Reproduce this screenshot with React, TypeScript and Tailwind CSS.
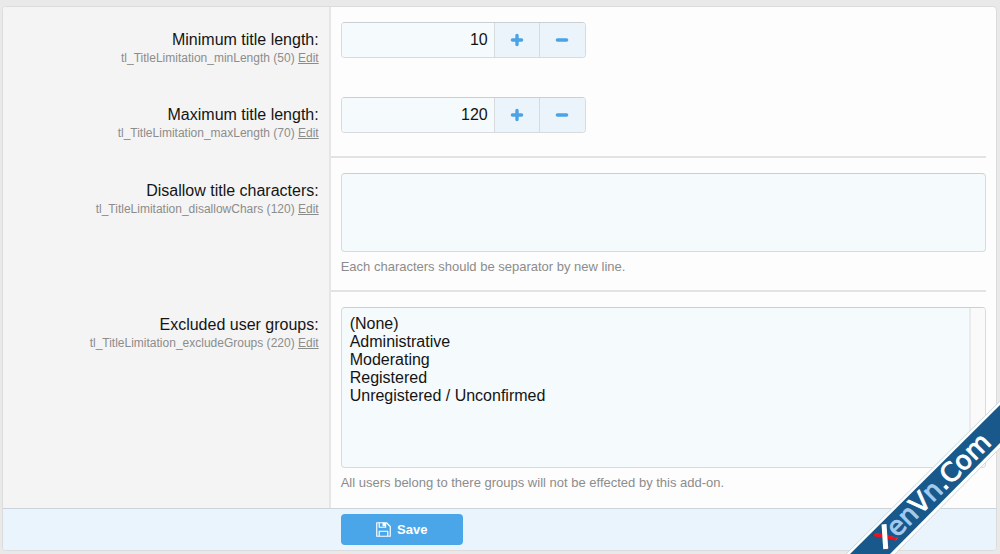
import React from 'react';

type RowProps = {
  id: string;
  label: string;
  name: string;
  order: number;
  divider?: boolean;
  children: React.ReactNode;
};

const FormRow: React.FC<RowProps> = ({ id, label, name, order, divider, children }) => (
  <div className="flex">
    <div className="w-[33%] shrink-0 border-r-2 border-[#e6e6e6] bg-[#f4f4f4] px-2.5 pt-[23px] text-right">
      <label htmlFor={id} className="block text-base leading-5 text-[#141414]">
        {label}
      </label>
      <div className="text-xs leading-4 text-[#8c8c8c]">
        {name} ({order}){' '}
        <a href="#edit" className="underline">
          Edit
        </a>
      </div>
    </div>
    <div className="flex min-w-0 grow flex-col pr-2.5">
      <div className="grow pl-2.5 pt-[15px]">{children}</div>
      {divider && <div className="h-0.5 bg-[#e3e3e3]" />}
    </div>
  </div>
);

const PlusIcon = () => (
  <svg width="14" height="14" viewBox="0 0 14 14" fill="none" stroke="#4aa3e5" strokeWidth="3.4" strokeLinecap="round">
    <path d="M7 2.4v9.2M2.4 7h9.2" />
  </svg>
);

const MinusIcon = () => (
  <svg width="14" height="14" viewBox="0 0 14 14" fill="none" stroke="#4aa3e5" strokeWidth="3.4" strokeLinecap="round">
    <path d="M2.4 7h9.2" />
  </svg>
);

const SaveIcon = () => (
  <svg width="15" height="15" viewBox="0 0 14 14" fill="none" stroke="currentColor" strokeWidth="1.1" strokeLinejoin="round">
    <path d="M.7.7h9.1l3.5 3.5v9.1H.7z" />
    <path d="M3 .9v4h6v-4" />
    <path d="M6.6 1.2h1.3v2.3H6.6z" fill="currentColor" />
    <path d="M3 13V8.6h8V13" />
  </svg>
);

const NumberBox: React.FC<{ id: string; value: number }> = ({ id, value }) => {
  const [current, setCurrent] = React.useState(value);

  return (
    <div className="flex h-9 w-[245px] overflow-hidden rounded border border-[#d8dbde] border-t-[#cccfd2]">
      <input
        id={id}
        type="text"
        inputMode="numeric"
        value={current}
        onChange={(e) => setCurrent(Number(e.target.value) || 0)}
        className="min-w-0 grow bg-[#f5fafd] px-1.5 text-right text-base text-[#141414] outline-none"
      />
      <button
        type="button"
        aria-label="Increase"
        onClick={() => setCurrent(current + 1)}
        className="flex w-[45px] shrink-0 items-center justify-center border-l border-[#d8dbde] bg-[#ebf4fb]"
      >
        <PlusIcon />
      </button>
      <button
        type="button"
        aria-label="Decrease"
        onClick={() => setCurrent(current - 1)}
        className="flex w-[46px] shrink-0 items-center justify-center border-l border-[#d8dbde] bg-[#ebf4fb]"
      >
        <MinusIcon />
      </button>
    </div>
  );
};

const Ribbon = () => (
  <svg className="pointer-events-none absolute right-0 bottom-0" width="160" height="160" viewBox="0 0 160 160">
    <path d="M1 165L165 2V49L50 165z" fill="#fdfefe" stroke="#cfd8dc" strokeWidth="1" />
    <path d="M5 165L165 6V44L45 165z" fill="#18588a" />
    <g transform="translate(45 156) rotate(-44.7)">
      <text fontFamily="DejaVu Sans, sans-serif" fontSize="26" fill="#fff" stroke="#fff" strokeWidth="0.9">
        <tspan fill="#f01018" stroke="#f01018">X</tspan>
        <tspan fill="#a5caee" stroke="#a5caee">en</tspan>
        <tspan>V</tspan>
        <tspan fill="#a5caee" stroke="#a5caee">n</tspan>
        <tspan>.Com</tspan>
      </text>
      {/* white arm crossing the red one */}
      <path d="M1.2 -.2L17.4 -19" stroke="#fff" strokeWidth="5" />
    </g>
  </svg>
);

const groups = ['(None)', 'Administrative', 'Moderating', 'Registered', 'Unregistered / Unconfirmed'];

export default function App() {
  return (
    <div className="relative min-h-screen overflow-hidden bg-[#e9e9e9] px-0.5 pt-1.5 font-['Liberation_Sans',Arial,sans-serif]">
      <form
        onSubmit={(e) => e.preventDefault()}
        className="mr-px overflow-hidden rounded border border-[#dcdcdc] bg-[#fdfdfd]"
      >
        <FormRow id="minLength" label="Minimum title length:" name="tl_TitleLimitation_minLength" order={50}>
          <div className="pb-6">
            <NumberBox id="minLength" value={10} />
          </div>
        </FormRow>
        <FormRow id="maxLength" label="Maximum title length:" name="tl_TitleLimitation_maxLength" order={70} divider>
          <div className="pb-[23px]">
            <NumberBox id="maxLength" value={120} />
          </div>
        </FormRow>
        <FormRow id="disallowChars" label="Disallow title characters:" name="tl_TitleLimitation_disallowChars" order={120} divider>
          <textarea
            id="disallowChars"
            className="block h-[79px] w-full resize-none rounded border border-[#d8dbde] border-t-[#cccfd2] bg-[#f5fafd] p-2 text-base outline-none"
          />
          <p className="pt-[5px] pb-[13px] text-[13px] leading-5 text-[#8c8c8c]">
            Each characters should be separator by new line.
          </p>
        </FormRow>
        <FormRow id="excludeGroups" label="Excluded user groups:" name="tl_TitleLimitation_excludeGroups" order={220}>
          <div className="flex h-[161px] overflow-hidden rounded border border-[#d8dbde] border-t-[#cccfd2] bg-[#f5fafd]">
            <select
              id="excludeGroups"
              multiple
              size={8}
              className="min-w-0 grow overflow-hidden px-2 py-[7px] text-base text-[#141414] outline-none"
            >
              {groups.map((group) => (
                <option key={group} className="min-h-0">
                  {group}
                </option>
              ))}
            </select>
            <div className="w-4 border-l-2 border-[#ebebeb] bg-[#fafafa]" />
          </div>
          <p className="pt-[5px] pb-[15px] text-[13px] leading-5 text-[#8c8c8c]">
            All users belong to there groups will not be effected by this add-on.
          </p>
        </FormRow>
        <div className="flex border-t border-[#cdd3da] bg-[#eaf4fc] py-[5px]">
          <div className="w-[33%] shrink-0" />
          <div className="pl-2.5">
            <button
              type="submit"
              className="flex h-[31px] w-[122px] items-center justify-center gap-1.5 rounded bg-[#4aa6e8] text-[13px] font-bold text-white"
            >
              <SaveIcon />
              Save
            </button>
          </div>
        </div>
      </form>
      <Ribbon />
    </div>
  );
}
